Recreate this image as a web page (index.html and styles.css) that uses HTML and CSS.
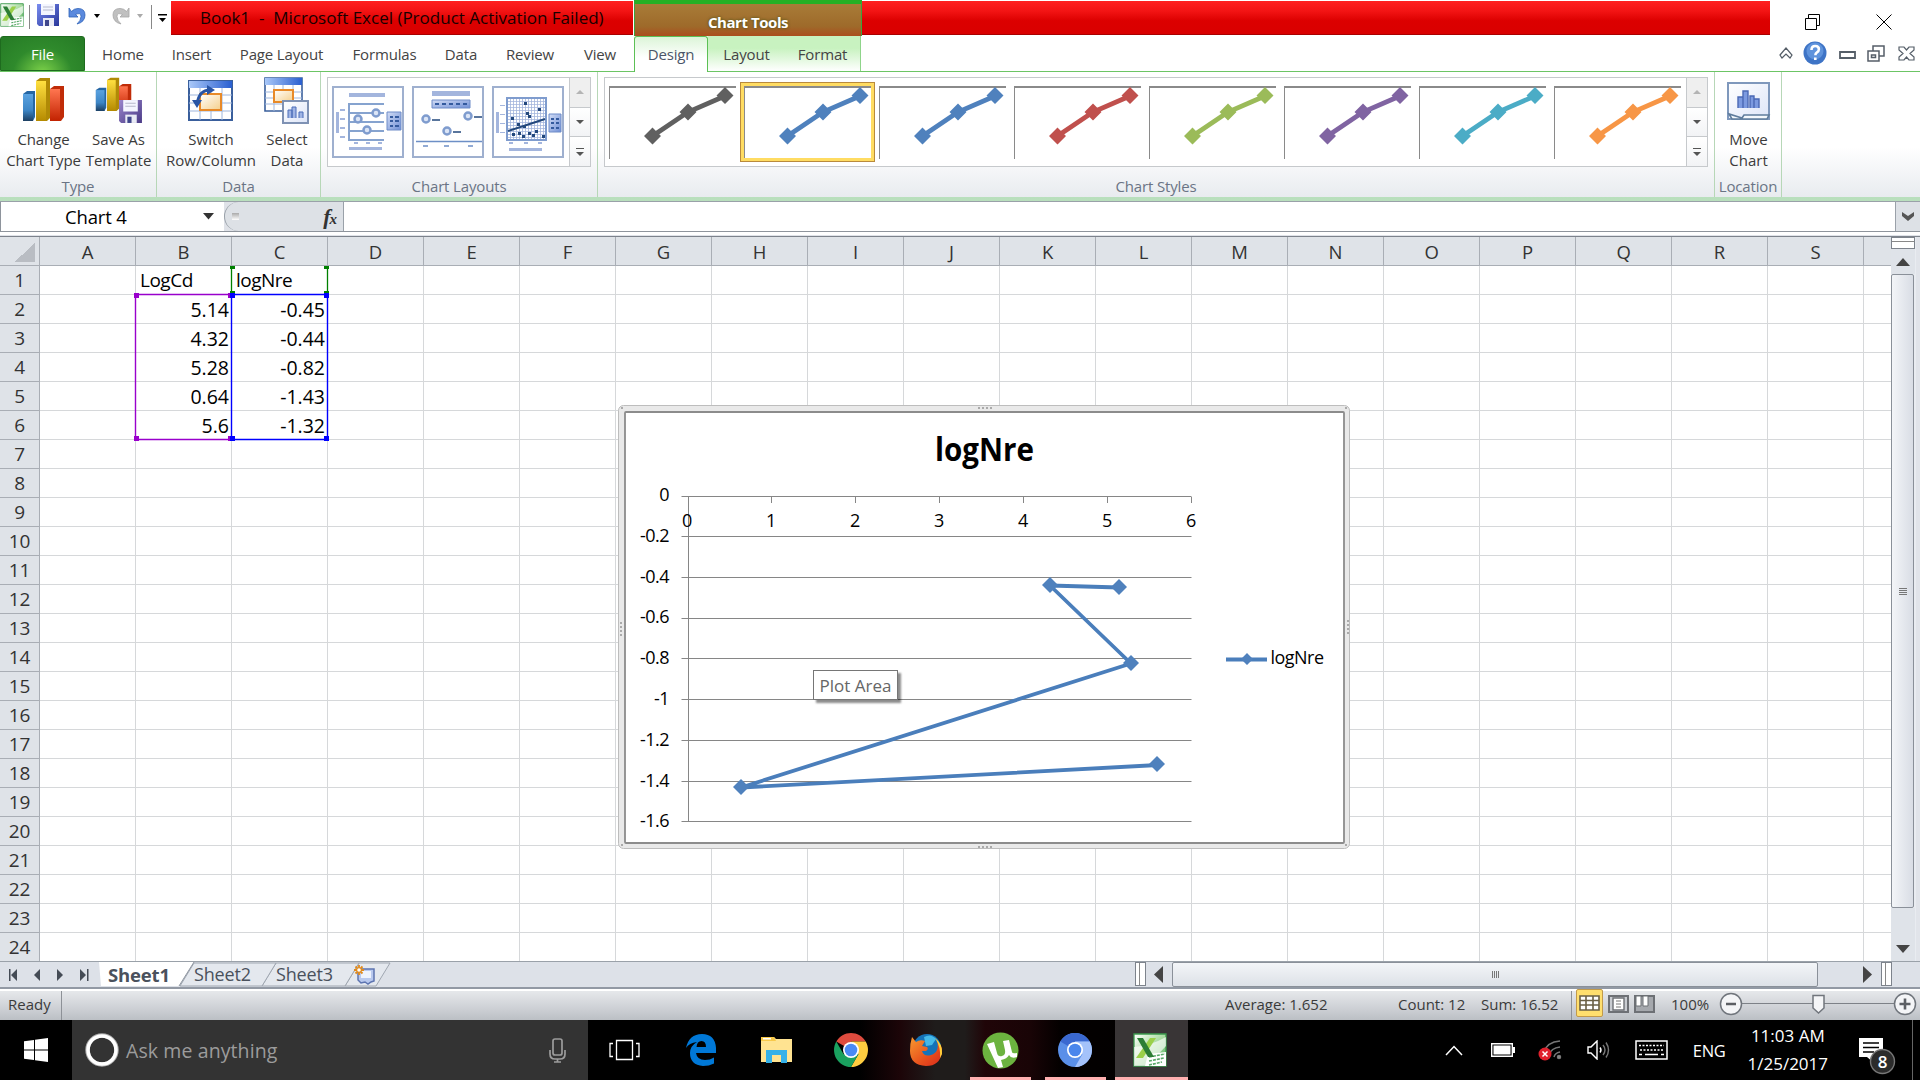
FILE: index.html
```
<!DOCTYPE html>
<html lang="en">
<head>
<meta charset="utf-8">
<title>Book1 - Microsoft Excel</title>
<link rel="stylesheet" href="styles.css">
</head>
<body>
<svg class="defs" width="0" height="0">
  <defs>
    <linearGradient id="gBlue" x2="0" y2="1"><stop offset="0" stop-color="#5aa2e0"/><stop offset=".6" stop-color="#3d86c6"/><stop offset="1" stop-color="#1d3f62"/></linearGradient>
    <linearGradient id="gYel" x2="0" y2="1"><stop offset="0" stop-color="#ffe040"/><stop offset="1" stop-color="#b58a00"/></linearGradient>
    <linearGradient id="gRed" x2="0" y2="1"><stop offset="0" stop-color="#ff7650"/><stop offset="1" stop-color="#c22200"/></linearGradient>
    <linearGradient id="gHead" x2="1"><stop offset="0" stop-color="#a9c8f8"/><stop offset="1" stop-color="#2a5fd0"/></linearGradient>
    <linearGradient id="gDisk" x2="1" y2="1"><stop offset="0" stop-color="#7a8df0"/><stop offset="1" stop-color="#28369a"/></linearGradient>
    <linearGradient id="gPur" x2="1" y2="1"><stop offset="0" stop-color="#9a86cc"/><stop offset="1" stop-color="#4a3a86"/></linearGradient>
    <linearGradient id="gCell" x2="1" y2="1"><stop offset="0" stop-color="#fff"/><stop offset="1" stop-color="#f5cf8a"/></linearGradient>
    <linearGradient id="gPane" x2="1" y2="1"><stop offset="0" stop-color="#fff"/><stop offset="1" stop-color="#dde5f8"/></linearGradient>
    <linearGradient id="gLeg" x2="1" y2="1"><stop offset="0" stop-color="#d3ddf5"/><stop offset="1" stop-color="#6f8fd6"/></linearGradient>
    <linearGradient id="gXl" x2="1" y2="1"><stop offset="0" stop-color="#fff"/><stop offset=".5" stop-color="#a9dba0"/><stop offset="1" stop-color="#4fae5c"/></linearGradient>
    <linearGradient id="gFox" x2="1" y2="1"><stop offset="0" stop-color="#f79a30"/><stop offset=".6" stop-color="#e8501c"/><stop offset="1" stop-color="#d8281c"/></linearGradient>
    <pattern id="dots" width="3" height="3" patternUnits="userSpaceOnUse"><path d="M0 0h3M0 0v3" stroke="#a3b5dd" stroke-width="1.6"/></pattern>
    <symbol id="bars3" viewBox="0 0 44 48">
      <path d="M1 17l4-3h8v26l-2 4H1z" fill="#2566a4"/><path d="M1 17h10v27H1z" fill="url(#gBlue)"/>
      <path d="M14 4l4-3h10v40l-3 3H14z" fill="#b08a06"/><path d="M14 4h10v40H14z" fill="url(#gYel)"/>
      <path d="M28 12l4-3h10v31l-3 4H28z" fill="#c02c08"/><path d="M28 12h10v32H28z" fill="url(#gRed)"/>
    </symbol>
    <symbol id="excel" viewBox="0 0 34 34">
      <path d="M1 1h32v32H1z" fill="url(#gXl)" stroke="#3d9a4e" stroke-width="1.3"/>
      <path d="M1 14q16-1 32-10v9L14 33H1z" fill="#fff" opacity=".65"/>
      <path d="M15 21l18-2v14H12z" fill="#fff"/>
      <path d="M16 24l16-3M16 28l15-3M16 32l13-3" stroke="#58a968" stroke-width="1.6" stroke-dasharray="3 1"/>
      <path d="M17 5h6L10 25H3z" fill="#9bd04a"/><path d="M4 5h6l11 19h-6z" fill="#2c7d35"/>
    </symbol>
    <symbol id="spark" viewBox="0 0 126 72">
      <path d="M42.500 50L78 26l37-16" fill="none" stroke="currentColor" stroke-width="4.800"/>
      <path d="M42.500 41.500l8.500 8.500-8.500 8.500-8.500-8.500zM78 17.500l8.500 8.500-8.500 8.500-8.500-8.500zM115 1l8.500 8.500-8.500 8.500-8.500-8.500z" fill="currentColor"/>
    </symbol>
    <symbol id="floppy" viewBox="0 0 24 24">
      <path d="M1 1h22v22H3l-2-2z" fill="inherit"/><path d="M5 1h14v11H5z" fill="#f4f6ff"/><path d="M7 4h10M7 7h10" stroke="#b6b9cc"/>
      <path d="M7 15h11v8H7z" fill="#e9ebf5"/><path d="M9 17h4v6H9z" fill="#40478c"/>
    </symbol>
  </defs>
</svg>
<div class="window">
  <header class="titlebar">
    <div class="quick">
      <svg width="24" height="24"><use href="#excel"/></svg>
      <i class="bar"></i>
      <svg class="q-save" width="24" height="24" fill="url(#gDisk)"><use href="#floppy"/></svg>
      <svg class="q-undo" width="18" height="18" viewBox="0 0 18 18"><path d="M1 1v9h9L7.500 7.500Q13 5 13 9.500q0 4-4 7.500 8-2 8-9 0-6.500-7-6.500-4 0-6.500 3z" fill="#5b8ade" stroke="#2f62b8" stroke-width=".8"/></svg>
      <svg class="q-car" width="6" height="5"><path d="M0 0h6L3 4z"/></svg>
      <svg class="q-redo" width="18" height="18" viewBox="0 0 18 18"><path d="M17 1v9H8l2.500-2.500Q5 5 5 9.500q0 4 4 7.500-8-2-8-9 0-6.500 7-6.500 4 0 6.500 3z" fill="#c0c0c0" stroke="#a6a6a6" stroke-width=".8"/></svg>
      <svg class="q-car2" width="6" height="5"><path d="M0 0h6L3 4z" fill="#aaa"/></svg>
      <i class="bar bar2"></i>
      <svg class="q-more" width="9" height="9"><path d="M0 0h9v1.500H0zM1 4h7L4.500 8z"/></svg>
    </div>
    <div class="title"><span>Book1&nbsp; -&nbsp; Microsoft Excel (Product Activation Failed)</span></div>
    <div class="context"><span>Chart Tools</span></div>
    <div class="title-rest"></div>
    <div class="winbtns">
      <svg width="16" height="16" viewBox="0 0 16 16" fill="none" stroke="#000"><path d="M.500 4.500h11v11H.500zM3.500 4V.500h11v11H12"/></svg>
      <svg width="16" height="16" viewBox="0 0 16 16" stroke="#000"><path d="M.500.500l15 15M15.500.500l-15 15"/></svg>
    </div>
  </header>
  <nav class="tabs">
    <div class="tab file">File</div>
    <div class="tab home">Home</div><div class="tab insert">Insert</div><div class="tab pagel">Page Layout</div><div class="tab formulas">Formulas</div><div class="tab data">Data</div><div class="tab review">Review</div><div class="tab view">View</div>
    <div class="tab design">Design</div>
    <div class="tab ctx layout">Layout</div><div class="tab ctx format">Format</div>
    <div class="tabs-right">
      <svg width="14" height="12" viewBox="0 0 14 12" fill="#fff" stroke="#555e68" stroke-width="1.200"><path d="M1 8l6-7 6 7-2 3-4-4-4 4z"/></svg>
      <svg width="24" height="24" viewBox="0 0 24 24"><circle cx="12" cy="12" r="11.500" fill="#3e74c6"/><circle cx="12" cy="10" r="8.500" fill="#5f93dc"/><path d="M8.500 9q0-4 3.700-4t3.700 3.300q0 2-2.200 3.300-1.300.8-1.300 2.600M12.300 16.500v2.500" fill="none" stroke="#fff" stroke-width="2.600"/></svg>
      <svg width="17" height="8" viewBox="0 0 17 8"><path d="M1 1h15v6H1z" fill="#fff" stroke="#555e68" stroke-width="1.800"/></svg>
      <svg width="18" height="17" viewBox="0 0 18 17" fill="#fff" stroke="#555e68" stroke-width="1.500"><path d="M6 1h11v10H6z"/><path d="M1 6h11v10H1zM4.500 10h4v2.500h-4z"/></svg>
      <svg width="17" height="15" viewBox="0 0 17 15"><path d="M1 1h5l2.500 3L11 1h5v3l-4 3.500 4 3.500v3h-5l-2.500-3L6 14H1v-3l4-3.500L1 4z" fill="#fff" stroke="#555e68" stroke-width="1.200"/></svg>
    </div>
  </nav>
  <section class="ribbon">
    <div class="group g-type">
      <div class="buttons">
        <div class="btn b1"><svg width="44" height="48"><use href="#bars3"/></svg><span>Change<br>Chart Type</span></div>
        <div class="btn b2"><svg width="48" height="48" viewBox="0 0 48 48"><svg x="0" y="0" width="38" height="37" viewBox="0 0 44 48" preserveAspectRatio="none"><use href="#bars3" width="44" height="48"/></svg><g fill="url(#gPur)"><use href="#floppy" x="23" y="22" width="25" height="25"/></g></svg><span>Save As<br>Template</span></div>
      </div>
      <div class="glabel">Type</div>
    </div>
    <div class="group g-data">
      <div class="buttons">
        <div class="btn b3"><svg width="46" height="48" viewBox="0 0 46 48"><path d="M1 4h43v39H1z" fill="#fff" stroke="#3a5f9c" stroke-width="2"/><path d="M1 4h43v7H1z" fill="url(#gHead)"/><path d="M1 18h43M1 26h43M1 34h43M12 11v32M23 11v32M34 11v32" stroke="#9fb6dc"/><path d="M12 17h21v16H12z" fill="url(#gCell)" stroke="#e88a28" stroke-width="2"/><path d="M9 27q2-14 13-14" fill="none" stroke="#2a55a4" stroke-width="2.800"/><path d="M19 8l8 5-8 5zM4 23l5 8 5-8z" fill="#2a55a4"/></svg><span>Switch<br>Row/Column</span></div>
        <div class="btn b4"><svg width="46" height="48" viewBox="0 0 46 48"><path d="M1 1h37v33H1z" fill="#fff" stroke="#3a5f9c" stroke-width="1.600"/><path d="M1 1h37v7H1z" fill="url(#gHead)"/><path d="M1 15h37M1 21h37M1 27h37M10 8v26M19 8v26M29 8v26" stroke="#9fb6dc"/><path d="M10 13h19v12H10z" fill="url(#gCell)" stroke="#e88a28" stroke-width="2"/><path d="M19 24h25v22H19z" fill="url(#gPane)" stroke="#7f92b4" stroke-width="2"/><path d="M24 41v-8h4v8M28 41V30h4v11M35 41v-6h4v6" fill="#9fb4e4" stroke="#4a6cb8"/></svg><span>Select<br>Data</span></div>
      </div>
      <div class="glabel">Data</div>
    </div>
    <div class="group g-layouts">
      <div class="gallery">
        <div class="thumbs">
          <svg class="lay" width="72" height="72" viewBox="0 0 72 72"><path d="M1 1h70v70H1z" fill="#fff" stroke="#9fb0cf" stroke-width="2"/><path d="M17 7h36v4H17zM17 61h33v3H17zM4 26h3v21H4zM22 56h4v2h-4zM34 56h4v2h-4zM46 56h4v2h-4zM8 23h5v2H8zM8 32h5v2H8zM8 41h5v2H8zM8 50h5v2H8z" fill="#a3b5dd"/><path d="M17 17v37M16 18h36M16 27h36M16 36h36M16 45h36M16 54h36" stroke="#86a3cf" stroke-width="2"/><g fill="#dce5f6" stroke="#7f9cce" stroke-width="2.500"><circle cx="26" cy="33" r="3.500"/><circle cx="44" cy="27" r="3.500"/><circle cx="35" cy="44" r="3.500"/></g><path d="M55 26h14v18H55z" fill="url(#gLeg)" stroke="#6f8cc8"/><path d="M58 31h3m2 0h4M58 35h3m2 0h4M58 40h3m2 0h4" stroke="#345a9e" stroke-width="2"/></svg>
          <svg class="lay" width="72" height="72" viewBox="0 0 72 72"><path d="M1 1h70v70H1z" fill="#fff" stroke="#9fb0cf" stroke-width="2"/><path d="M20 5h38v5H20z" fill="#a3b5dd"/><path d="M20 14h38v8H20z" fill="url(#gLeg)" stroke="#6f8cc8"/><path d="M23 18h32" stroke="#345a9e" stroke-width="2" stroke-dasharray="4 3"/><g fill="#dce5f6" stroke="#7f9cce" stroke-width="2.500"><circle cx="14" cy="33" r="3.500"/><circle cx="56" cy="30" r="3.500"/><circle cx="35" cy="45" r="3.500"/></g><path d="M20 34h8M62 31h8M41 46h8" stroke="#23487c" stroke-width="1.600"/><path d="M4 55.500h66M11 60h5M32 60h5M56 60h5" stroke="#6d8fc6" stroke-width="1.600"/></svg>
          <svg class="lay" width="72" height="72" viewBox="0 0 72 72"><path d="M1 1h70v70H1z" fill="#fff" stroke="#9fb0cf" stroke-width="2"/><path d="M15 12h39v42H15z" fill="url(#dots)" stroke="#7f9cce" stroke-width="2"/><path d="M4 26h3v21H4zM8 19h5v1H8zM8 28h5v1H8zM8 37h5v1H8zM8 46h5v1H8zM17 56h4v2h-4zM32 56h4v2h-4zM46 56h4v2h-4zM17 62h33v3H17z" fill="#a3b5dd"/><path d="M16 45l37-12" stroke="#23487c" stroke-width="2"/><path d="M32 16h3v3h-3zM46 22h3v3h-3zM34 26h3v3h-3zM36 29h3v3h-3zM19 31h3v3h-3zM25 37h3v3h-3zM31 39h3v3h-3zM20 47h3v3h-3zM26 46h3v3h-3zM30 49h3v3h-3zM36 46h3v3h-3zM43 44h3v3h-3zM40 48h3v3h-3zM50 49h3v3h-3z" fill="#23487c"/><path d="M57 28h12v18H57z" fill="url(#gLeg)" stroke="#6f8cc8"/><path d="M59 33h3m2 0h3M59 37h3m2 0h3M59 42h3m2 0h3" stroke="#345a9e" stroke-width="2"/></svg>
        </div>
        <div class="spin"><b class="dis"><i></i></b><b><i></i></b><b class="more"><i></i></b></div>
      </div>
      <div class="glabel">Chart Layouts</div>
    </div>
    <div class="group g-styles">
      <div class="gallery">
        <div class="thumbs" id="styles">
          <div class="sty c0"><svg><use href="#spark"/></svg></div><div class="sty c1 sel"><svg><use href="#spark"/></svg></div><div class="sty c1"><svg><use href="#spark"/></svg></div><div class="sty c2"><svg><use href="#spark"/></svg></div><div class="sty c3"><svg><use href="#spark"/></svg></div><div class="sty c4"><svg><use href="#spark"/></svg></div><div class="sty c5"><svg><use href="#spark"/></svg></div><div class="sty c6"><svg><use href="#spark"/></svg></div>
        </div>
        <div class="spin"><b class="dis"><i></i></b><b><i></i></b><b class="more"><i></i></b></div>
      </div>
      <div class="glabel">Chart Styles</div>
    </div>
    <div class="group g-loc">
      <div class="buttons">
        <div class="btn b5"><svg width="46" height="48" viewBox="0 0 46 48"><path d="M2 6h41v36H2z" fill="url(#gPane)" stroke="#7f98bc" stroke-width="2"/><path d="M3 37l3 5h35l2-4H18l-2 3z" fill="#f4f8fc" stroke="#5f7c9c" stroke-width="1.600"/><path d="M12 31V20h5v11M17 31V14h5v17M24 31V19h4v12M28 31V22h5v9" fill="#7c9ae0" stroke="#4a68b4" stroke-width="1.400"/></svg><span>Move<br>Chart</span></div>
      </div>
      <div class="glabel">Location</div>
    </div>
  </section>
  <section class="formula">
    <div class="namebox"><span>Chart 4</span><svg width="11" height="7"><path d="M0 0h11L5.500 6.500z" fill="#333"/></svg></div>
    <div class="fx"><i></i><em>f<small>x</small></em></div>
    <div class="fin"></div>
    <div class="fexp"><svg width="14" height="9" viewBox="0 0 14 9"><path d="M1 0l6 4 6-4v4L7 9 1 4z" fill="#555"/></svg></div>
  </section>
  <main class="sheet">
    <div class="cells">
      <div class="colheads" id="cols"><div class="corner"></div></div>
      <div class="rows" id="rows"></div>
      <svg class="ranges" width="200" height="180" viewBox="0 0 200 180">
        <path d="M.500 29v144M0 28.500h96M0 173.500h96" stroke="#9900cc" fill="none" stroke-width="1.400"/>
        <path d="M96.500 0v29M192.500 0v29" stroke="#008000" stroke-width="1.300"/>
        <path d="M96.500 28.500h96v145h-96z" stroke="#0000ff" fill="none" stroke-width="1.400"/>
        <path d="M-1 27h5v5h-5zM-1 170h5v5h-5zM93 27h4v5h-4zM93 170h4v5h-4z" fill="#9900cc"/>
        <path d="M95 0h5v3h-5zM189 0h5v3h-5zM95 25h5v3h-5zM189 25h5v3h-5z" fill="#008000"/>
        <path d="M95 27h5v5h-5zM95 170h5v5h-5zM189 27h5v5h-5zM189 170h5v5h-5z" fill="#0000ff"/>
      </svg>
      <svg class="chart" width="734" height="446" viewBox="618 404 734 446">
        <rect x="618.500" y="405.500" width="731" height="443" rx="5" fill="#e9e9e9" stroke="#bdbdbd"/>
        <rect x="625" y="412" width="719" height="431" rx="1" fill="#fff" stroke="#8c8c8c" stroke-width="1.800"/>
        <g fill="#aaa"><path d="M978 407h2v2h-2zm4 0h2v2h-2zm4 0h2v2h-2zm4 0h2v2h-2zM978 846h2v2h-2zm4 0h2v2h-2zm4 0h2v2h-2zm4 0h2v2h-2zM620 622h2v2h-2zm0 4h2v2h-2zm0 4h2v2h-2zm0 4h2v2h-2zM1347 620h2v2h-2zm0 4h2v2h-2zm0 4h2v2h-2zm0 4h2v2h-2zM621 407h2v2h-2zM1345 407h2v2h-2zM621 844h2v2h-2zM1345 844h2v2h-2z"/></g>
        <text class="ct" x="935" y="460.500" textLength="99" lengthAdjust="spacingAndGlyphs">logNre</text>
        <path d="M681.500 496.500h510M681.500 536.500h510M681.500 577.500h510M681.500 618.500h510M681.500 658.500h510M681.500 699.500h510M681.500 740.500h510M681.500 781.500h510M681.500 821.500h510M688.500 496v326M771.500 497v6M855.500 497v6M939.500 497v6M1023.500 497v6M1107.500 497v6M1191.500 497v6" stroke="#868686" fill="none"/>
        <g class="ax" text-anchor="end"><text x="669" y="501">0</text><text x="669" y="541.500">-0.2</text><text x="669" y="582.500">-0.4</text><text x="669" y="623">-0.6</text><text x="669" y="664">-0.8</text><text x="669" y="705">-1</text><text x="669" y="745.500">-1.2</text><text x="669" y="786.500">-1.4</text><text x="669" y="827">-1.6</text></g>
        <g class="ax" text-anchor="middle"><text x="687" y="527">0</text><text x="771" y="527">1</text><text x="855" y="527">2</text><text x="939" y="527">3</text><text x="1023" y="527">4</text><text x="1107" y="527">5</text><text x="1191" y="527">6</text></g>
        <path d="M1119 587.500l-69-2 81 78L741 787.500l417-22.500" fill="none" stroke="#4a7ebb" stroke-width="3.800" stroke-linejoin="round"/>
        <path d="M1226 659.500h41" stroke="#4a7ebb" stroke-width="4"/>
        <path d="M1119 579l8 8-8 8-8-8zM1050 577l8 8-8 8-8-8zM1131 655l8 8-8 8-8-8zM741 779l8 8-8 8-8-8zM1157 756l8 8-8 8-8-8zM1247 653l6 6-6 6-6-6z" fill="#4f81bd"/>
        <text class="ax" x="1270.500" y="664" textLength="53" lengthAdjust="spacingAndGlyphs">logNre</text>
      </svg>
      <div class="tooltip">Plot Area</div>
    </div>
    <div class="vscroll">
      <div class="vsplit"></div>
      <div class="varrow up"></div>
      <div class="vthumb"><i></i></div>
      <div class="varrow down"></div>
    </div>
  </main>
  <section class="sheetbar">
    <div class="snav">
      <svg width="9" height="12"><path d="M0 0h1.500v12H0zM8 0v12L2 6z" fill="#444b55"/></svg>
      <svg width="7" height="12"><path d="M6 0v12L0 6z" fill="#444b55"/></svg>
      <svg width="7" height="12"><path d="M0 0v12l6-6z" fill="#444b55"/></svg>
      <svg width="9" height="12"><path d="M7 0h1.500v12H7zM0 0v12l6-6z" fill="#444b55"/></svg>
    </div>
    <div class="stabs">
      <svg class="tabshapes" width="300" height="25" viewBox="0 0 300 25"><path d="M247 24l14-23h31l-14 23z" fill="#e4e8ee" stroke="#a0a7b1"/><path d="M164 24l14-23h83l-14 23z" fill="#e4e8ee" stroke="#a0a7b1"/><path d="M82 24L96 1h82l-14 23z" fill="#e4e8ee" stroke="#a0a7b1"/><path d="M1 0h95L81 24H3z" fill="#fff"/><path d="M96 0L81 24" stroke="#8f96a0"/></svg>
      <span class="s1">Sheet1</span><span class="s2">Sheet2</span><span class="s3">Sheet3</span>
      <svg class="snew" width="24" height="20" viewBox="0 0 24 20"><path d="M5 4h16v12l-3 1-3 2-3-2-4 1-3-3z" fill="#b9c9ee" stroke="#5d74b0" stroke-width="1.500"/><path d="M8 6h10v7H8z" fill="#eef3fd"/><path d="M6 0v10M1 5h10M2.500 1.500l7 7M9.500 1.500l-7 7" stroke="#e08a1c" stroke-width="1.800"/><circle cx="6" cy="5" r="1.800" fill="#fff"/></svg>
    </div>
    <div class="hsplit"></div>
    <div class="harrow"><svg width="9" height="17"><path d="M9 0v17L0 8.500z" fill="#444"/></svg></div>
    <div class="hthumb"><i></i></div>
    <div class="htrack"></div>
    <div class="harrow hr"><svg width="9" height="17"><path d="M0 0v17l9-8.500z" fill="#444"/></svg></div>
    <div class="hsplit last"></div>
  </section>
  <section class="status">
    <div class="ready">Ready</div>
    <div class="avg">Average: 1.652</div><div class="cnt">Count: 12</div><div class="sum">Sum: 16.52</div>
    <div class="views">
      <div class="v on"><svg width="21" height="16" viewBox="0 0 21 16"><path d="M1 1h19v14H1zM1 5.500h19M1 10h19M7 1v14M14 1v14" fill="#fff" stroke="#6a6045" stroke-width="1.600"/></svg></div>
      <svg width="21" height="18" viewBox="0 0 21 18"><path d="M1 1h19v16H1z" fill="#c9ccd1" stroke="#6d7075" stroke-width="2"/><path d="M5 3h11v12H5z" fill="#fff" stroke="#6d7075" stroke-width="1.400"/><path d="M8 6h5M8 9h5M8 12h5" stroke="#777"/></svg>
      <svg width="21" height="18" viewBox="0 0 21 18"><path d="M1 1h19v16H1z" fill="#a5a8ad" stroke="#6d7075" stroke-width="2"/><path d="M2 1h5v10H2zM9 1h5v10H9z" fill="#fff" stroke="#6d7075"/></svg>
    </div>
    <div class="pct">100%</div>
    <svg class="zoombar" width="200" height="26" viewBox="0 0 200 26"><path d="M24 12.500h152" stroke="#7d8187"/><g fill="#f4f5f7" stroke="#70757c" stroke-width="1.500"><circle cx="13" cy="13" r="10.500"/><circle cx="187" cy="13" r="10.500"/><path d="M95 4.500h11V17l-5.500 5L95 17z"/></g><path d="M8 13h10M181.500 13h11M187 7.500v11" stroke="#5c5f64" stroke-width="2.600"/></svg>
  </section>
  <footer class="taskbar">
    <div class="start"><svg width="24" height="24" viewBox="0 0 24 24" fill="#fff"><path d="M0 3.200L10 2v9.500H0zM11 1.800L24 0v11.500H11zM0 12.500h10V22L0 20.800zM11 12.500h13V24l-13-1.800z"/></svg></div>
    <div class="search">
      <svg width="34" height="34" viewBox="0 0 34 34"><circle cx="17" cy="17" r="14.500" fill="none" stroke="#aaa" stroke-width="4.500"/><circle cx="17" cy="17" r="14" fill="none" stroke="#fff" stroke-width="3.500"/></svg>
      <span>Ask me anything</span>
      <svg width="17" height="25" viewBox="0 0 17 25" fill="none" stroke="#9c9c9c" stroke-width="1.700"><rect x="4" y="1" width="9" height="16" rx="2"/><path d="M1 12v4q0 5 5 5h5q5 0 5-5v-4M8.500 21v3M5 24h7"/></svg>
    </div>
    <div class="app tv"><svg width="31" height="22" viewBox="0 0 31 22" fill="none" stroke="#fff" stroke-width="1.300"><path d="M7.500 1.500h16v19h-16zM4 4.500H1v13h3M27 4.500h3v13h-3"/></svg></div>
    <div class="app"><svg width="32" height="34" viewBox="0 0 32 34"><path d="M1 15Q4 1 17 1q13 0 14 14v5H11q1 7 9 7 5 0 9-2.500v6Q24 33 18 33 5 32 5 20q0-7 7-11Q4 10 1 15zM11.500 14H21q0-6-4.500-6T11.500 14z" fill="#0078d7"/></svg></div>
    <div class="app"><svg width="33" height="28" viewBox="0 0 33 28"><path d="M1 1h13l2 2h16v23H1z" fill="#ffe391"/><path d="M1 1h13l2 4H1z" fill="#f8c94a"/><path d="M3 2h8v1.500H3z" fill="#fff"/><path d="M6 14h21v13h-6v-8h-9v8H6z" fill="#35b1e8"/></svg></div>
    <div class="app"><svg width="34" height="34" viewBox="0 0 34 34"><path d="M17 17L2.300 8.500A17 17 0 0 1 31.700 8.500H17z" fill="#dd4b3e"/><path d="M17 8.500h14.700A17 17 0 0 1 17 34l7.400-12.700z" fill="#ffcd40"/><path d="M2.300 8.500A17 17 0 0 0 17 34l7.400-12.700L17 17l-7.400 4.200z" fill="#1aa15f"/><circle cx="17" cy="17" r="8" fill="#fff"/><circle cx="17" cy="17" r="6.300" fill="#4a8af4"/></svg></div>
    <div class="app"><svg width="34" height="34" viewBox="0 0 34 34"><circle cx="18" cy="15" r="14" fill="#1573b8"/><path d="M15 4q7-4 12 2l-4 6-6 1z" fill="#45b9e8"/><path d="M3 4l4 5q4-3 9-1l-3 5 5 1q2 2-1 4h-4q2 6 9 4 9-3 6-14 6 6 5 11-2 14-16 14Q1 32 1 18 1 10 3 4z" fill="url(#gFox)"/><path d="M26 5q8 6 7 16l-2 4q1-11-5-20z" fill="#ffcf3a"/></svg></div>
    <div class="app run"><svg width="37" height="37" viewBox="0 0 37 37"><circle cx="18.500" cy="18.500" r="18" fill="#6cb33f"/><path d="M5 12l7-2 3 11q1 4 5 3 4-1 3-6l-2-9 6-1 3 12q0 2 5 1v4q-6 2-8-2-2 4-8 5l2 7-5 1z" fill="#fff"/></svg></div>
    <div class="app run"><svg width="34" height="34" viewBox="0 0 34 34"><circle cx="17" cy="17" r="17" fill="#5a8fe8"/><path d="M17 17L2.300 8.500A17 17 0 0 1 31.700 8.500H17z" fill="#3a68d0"/><path d="M17 8.500h14.700A17 17 0 0 1 17 34l7.400-12.700z" fill="#a4c2fa"/><circle cx="17" cy="17" r="8" fill="#fff"/><circle cx="17" cy="17" r="6.300" fill="#4a86ec"/></svg></div>
    <div class="app run active"><svg width="34" height="34"><use href="#excel"/></svg></div>
    <div class="tray">
      <svg class="t-up" width="18" height="11" viewBox="0 0 18 11" fill="none" stroke="#fff" stroke-width="1.500"><path d="M1 10l8-8.500 8 8.500"/></svg>
      <svg class="t-bat" width="24" height="14" viewBox="0 0 24 14"><path d="M.700.700h20.600v12.600H.700z" fill="none" stroke="#fff" stroke-width="1.400"/><path d="M2.500 2.500h17v9h-17zM22 4h2v6h-2z" fill="#fff"/></svg>
      <svg class="t-wifi" width="24" height="22" viewBox="0 0 24 22" fill="none" stroke="#777" stroke-width="1.500"><path d="M6 13Q9 3 22 2M11 16q2-7 11-8M16 18q1-4 6-5"/><circle cx="21" cy="18" r="1.500" fill="#999"/><circle cx="7" cy="15" r="6.500" fill="#e0202c" stroke="none"/><path d="M4.500 12.500l5 5M9.500 12.500l-5 5" stroke="#fff"/></svg>
      <svg class="t-vol" width="23" height="20" viewBox="0 0 23 20" fill="none" stroke="#fff" stroke-width="1.400"><path d="M1 7h3l6-6v18l-6-6H1z"/><path d="M13 7.500q2 2.500 0 5"/><path d="M16 5q4 5 0 10M19 2.500q5 7.500 0 15" stroke="#777"/></svg>
      <svg class="t-kbd" width="33" height="20" viewBox="0 0 33 20" fill="none" stroke="#fff" stroke-width="1.500"><path d="M1 1h31v18H1z"/><path d="M4 5.500h25M5 10h23" stroke-dasharray="2 1.500"/><path d="M4 14.500h3m3 0h13m3 0h3"/></svg>
      <span class="t-eng">ENG</span>
      <div class="clock"><span>11:03 AM</span><span>1/25/2017</span></div>
      <svg class="t-note" width="38" height="38" viewBox="0 0 38 38"><path d="M1 1h24v19h-9v6l-7-6H1z" fill="#fff"/><path d="M5 6h16M5 10.500h16M5 15h11" stroke="#000" stroke-width="1.500"/><circle cx="24.500" cy="24.500" r="12" fill="#2b2b2b" stroke="#777" stroke-width="1.400"/><text x="24.500" y="30.500" text-anchor="middle" class="badge">8</text></svg>
    </div>
  </footer>
</div>
<script src="grid.js"></script>
</body>
</html>
```
FILE: grid.js
```
const values = {
  1: { B: 'LogCd', C: 'logNre' },
  2: { B: '5.14', C: '-0.45' },
  3: { B: '4.32', C: '-0.44' },
  4: { B: '5.28', C: '-0.82' },
  5: { B: '0.64', C: '-1.43' },
  6: { B: '5.6', C: '-1.32' }
};
const letters = 'ABCDEFGHIJKLMNOPQRS'.split('');
const add = (parent, cls, text) => {
  const el = document.createElement('div');
  el.className = cls;
  if (text) el.textContent = text;
  parent.appendChild(el);
  return el;
};
const cols = document.getElementById('cols');
letters.forEach(l => add(cols, 'colhead', l));
add(cols, 'colhead rest');
const rows = document.getElementById('rows');
for (let r = 1; r <= 24; r++) {
  const row = add(rows, 'row');
  add(row, 'rowhead', String(r));
  letters.forEach(l => {
    const v = values[r] && values[r][l];
    add(row, v && r > 1 ? 'cell num' : 'cell', v);
  });
  add(row, 'cell rest');
}
```
FILE: styles.css
```
* { box-sizing: border-box; }
body { margin: 0; background: #fff; font-family: "Open Sans", "Noto Sans", sans-serif; font-size: 15px; letter-spacing: -0.15px; color: #3b3b3b; overflow: hidden; }
.defs { position: absolute; }
svg { display: block; flex: none; }
.window { width: 1920px; height: 1080px; display: flex; flex-direction: column; }

.titlebar { height: 36px; display: flex; flex: none; }
.quick { width: 171px; flex: none; display: flex; align-items: flex-start; padding: 3px 0 0 0; }
.quick .bar { width: 1px; height: 24px; background: #888; margin: 2px 0 0 5px; }
.q-save { margin-left: 6px; }
.q-undo { margin: 4px 0 0 8px; }
.q-car { margin: 11px 0 0 8px; }
.q-redo { margin: 4px 0 0 12px; }
.q-car2 { margin: 11px 0 0 7px; }
.quick .bar2 { margin-left: 8px; }
.q-more { margin: 11px 0 0 6px; }
.title, .title-rest { margin: 1px 0; background: linear-gradient(#ff2020, #f31414 30%, #dc0000 60%, #d90000); border-bottom: 1px solid #a80000; }
.title { width: 462px; padding-left: 29px; font-size: 17px; line-height: 34px; color: #180000; white-space: nowrap; letter-spacing: 0; }
.context { width: 228px; margin-left: 1px; border-top: 4px solid #25b025; border-right: 1px solid #3ea23e; border-left: 1px solid #3ea23e; background: linear-gradient(#a87c38, #9e6a2a 70%, #ab4e1e); color: #fff; font-weight: 700; text-align: center; line-height: 36px; text-shadow: 0 0 3px #3c4a10; letter-spacing: -0.45px; }
.title-rest { width: 908px; }
.winbtns { display: flex; gap: 55px; padding: 14px 0 0 35px; }

.tabs { height: 36px; display: flex; flex: none; border-bottom: 1px solid #6cc565; }
.tab { text-align: center; line-height: 36px; height: 36px; color: #444; }
.file { width: 85px; background: radial-gradient(ellipse at 50% 110%, #7ed34a, #2f8a2c 50%, #257a25); color: #fff; border: 1px solid #1e6b1e; border-radius: 3px 3px 0 0; height: 35px; line-height: 34px; }
.home { width: 76px; }
.insert { width: 61px; }
.pagel { width: 119px; }
.formulas { width: 87px; }
.data { width: 66px; }
.review { width: 72px; }
.view { width: 68px; }
.design { width: 74px; border: 1px solid #5cc055; border-bottom: 0; border-radius: 3px 3px 0 0; background: linear-gradient(#dcf5d8, #fff 60%); line-height: 34px; color: #4a5568; }
.ctx { background: linear-gradient(#c8f2c0 35%, #fff); height: 35px; }
.layout { width: 77px; }
.format { width: 76px; border-right: 1px solid #8fd48a; }
.tabs-right { margin-left: auto; display: flex; align-items: center; gap: 10px; padding: 0 5px 1px 0; }
.tabs-right svg:nth-child(3) { margin: 4px 0 0 2px; }
.tabs-right svg:nth-child(4) { margin-left: 1px; }
.tabs-right svg:nth-child(5) { margin-left: 3px; }

.ribbon { height: 129px; flex: none; display: flex; background: linear-gradient(#fff 60%, #e8ebef); border-image: linear-gradient(#7fae86, #9fd0a5 50%, #b9dfbd) 1; border-width: 0 0 4px; border-style: solid; }
.group { border-right: 1px solid #b7d7b7; display: flex; flex-direction: column; justify-content: space-between; height: 125px; flex: none; }
.g-type { width: 157px; }
.g-data { width: 164px; }
.g-layouts { width: 277px; }
.g-styles { width: 1117px; }
.g-loc { width: 67px; }
.glabel { text-align: center; color: #6a7485; line-height: 22px; height: 22px; }
.buttons { display: flex; }
.btn { display: flex; flex-direction: column; align-items: center; text-align: center; line-height: 21px; white-space: nowrap; padding-top: 5px; gap: 4px; flex: none; letter-spacing: 0; }
.b1 { width: 81px; padding-left: 6px; letter-spacing: -0.1px; }
.b2 { width: 75px; }
.b3 { width: 108px; }
.b4 { width: 44px; }
.b5 { width: 67px; }
.gallery { display: flex; height: 90px; margin: 5px 6px 0; }
.thumbs { border: 1px solid #c6c9cc; border-right: 0; background: #fff; display: flex; flex: 1; padding: 8px 0 0 4px; gap: 8px; }
#styles { gap: 8px; padding-left: 4px; }
.spin { width: 22px; display: flex; flex-direction: column; }
.spin b { flex: 1; border: 1px solid #c6c9cc; border-bottom-width: 0; background: linear-gradient(#fff, #f2f3f5); display: flex; align-items: center; justify-content: center; }
.spin b:last-child { border-bottom-width: 1px; }
.spin b.dis { background: #efefef; }
.spin i { border: 4px solid transparent; border-top: 4px solid #555; border-bottom: 0; }
.spin .dis i { border-top: 0; border-bottom: 4px solid #b4b4b4; }
.spin .more i { position: relative; top: 2px; }
.spin .more i::before { content: ""; position: absolute; left: -4px; top: -8px; width: 8px; height: 1px; background: #555; }
.sty { width: 127px; height: 73px; border-left: 1.500px solid #8a8a8a; border-top: 2px solid #8a8a8a; flex: none; }
.sty svg { width: 126px; height: 72px; margin-top: -2px; }
.sty.sel { box-shadow: 0 0 0 3px #ffdc62, 0 0 0 4px #b98a3c; height: 72px; }
.c0 { color: #606060; } .c1 { color: #4f81bd; } .c2 { color: #c0504d; } .c3 { color: #9bbb59; } .c4 { color: #8064a2; } .c5 { color: #4bacc6; } .c6 { color: #f79646; }

.formula { height: 35px; flex: none; display: flex; border-top: 1px solid #9aa1a9; background: linear-gradient(#dfe2e8 29px, #8e949c 29px, #8e949c 30px, #fff 30px, #fff 33px, #dfe2e8 33px); }
.formula > div { height: 29px; }
.namebox { width: 224px; background: #fff; border-left: 1px solid #8e949c; display: flex; justify-content: space-between; align-items: center; padding: 0 10px 0 64px; font-size: 18.500px; color: #000; }
.fx { width: 120px; background: #dde1e6; border: 1px solid #9aa1a9; border-width: 0 1px 0 1px; border-radius: 15px 0 0 15px; display: flex; justify-content: space-between; align-items: center; padding: 0 7px; }
.fx i { width: 7px; height: 7px; background: linear-gradient(#aaa, #fff); }
.fx em { font: italic bold 22px "Liberation Serif", serif; color: #333; letter-spacing: -1px; }
.fx small { font-size: 15px; }
.fin { flex: 1; background: #fff; }
.fexp { width: 25px; background: #dde1e6; border-left: 1px solid #9aa1a9; display: flex; align-items: center; justify-content: center; }

.sheet { height: 725px; flex: none; display: flex; border-top: 1px solid #7d838c; }
.cells { width: 1891px; flex: none; overflow: hidden; position: relative; }
.colheads { display: flex; height: 29px; }
.corner { width: 40px; flex: none; border-right: 1px solid #a9aeb5; border-bottom: 1px solid #a9aeb5; background: linear-gradient(135deg, transparent 50%, #b9bdc3 50%) 15px 5px / 20px 20px no-repeat #dfe3e8; }
.colhead { width: 96px; flex: none; text-align: center; line-height: 29px; font-size: 18.500px; color: #333; background: #dfe3e8; border-right: 1px solid #a9aeb5; border-bottom: 1px solid #a9aeb5; }
.rest { width: 60px; }
.row { display: flex; height: 29px; }
.rowhead { width: 40px; flex: none; text-align: center; line-height: 29px; font-size: 19px; color: #333; background: #dfe3e8; border-right: 1px solid #a9aeb5; border-bottom: 1px solid #a9aeb5; }
.cell { width: 96px; flex: none; border-right: 1px solid #d6d8da; border-bottom: 1px solid #d6d8da; font-size: 19px; line-height: 29px; padding: 0 2px 0 4px; color: #000; letter-spacing: -0.5px; }
.num { text-align: right; font-size: 19.500px; letter-spacing: 0; }
.ranges { position: absolute; left: 135px; top: 29px; overflow: visible; }
.chart { position: absolute; left: 618px; top: 167px; }
.ax { font-size: 18px; letter-spacing: -0.5px; fill: #000; }
.ct { font-size: 32px; font-weight: 700; fill: #000; letter-spacing: 0; }
.tooltip { position: absolute; left: 813px; top: 433px; width: 85px; height: 30px; border: 1px solid #767676; background: #fff; color: #666; font-size: 17px; letter-spacing: 0; line-height: 29px; text-align: center; box-shadow: 3px 3px 2px rgba(0,0,0,.45); }

.vscroll { width: 29px; background: #e9ecf1; border-right: 4px solid #e1e4ea; display: flex; flex-direction: column; }
.vsplit { height: 12px; border: 1.500px solid #7d838c; background: linear-gradient(#fff 3px, #888 3px, #888 4px, #fff 4px); width: 24px; }
.varrow { height: 25px; display: flex; align-items: center; justify-content: center; background: #dfe3e9; width: 24px; }
.varrow::before { content: ""; border: 7.500px solid transparent; border-bottom: 8px solid #444; border-top: 0; }
.vthumb { height: 634px; width: 23px; border: 1px solid #8a9099; border-radius: 2px; background: linear-gradient(90deg, #f3f5f8, #d9dde5); display: flex; align-items: center; justify-content: center; }
.vthumb i { width: 8px; height: 7px; background: repeating-linear-gradient(#777 0 1px, transparent 1px 2px); }
.down { flex: 1; height: auto; align-items: flex-end; padding-bottom: 8px; }
.down::before { border-top: 8px solid #444; border-bottom: 0; }

.sheetbar { height: 30px; flex: none; display: flex; background: linear-gradient(#dde1e8 25px, #9299a4 25px, #9299a4 27px, #fff 27px); border-top: 1px solid #9aa1a9; }
.snav { width: 98px; display: flex; gap: 16px; padding: 7px 0 0 9px; }
.stabs { position: relative; width: 1037px; display: flex; font-size: 18px; line-height: 25px; color: #4a515c; letter-spacing: -0.15px; }
.tabshapes { position: absolute; left: 0; top: 0; }
.stabs span { position: relative; width: 82px; }
.stabs .s1 { width: 96px; padding-left: 10px; font-weight: 700; font-size: 18.500px; }
.snew { position: relative; margin: 3px 0 0 -5px; }
.hsplit { width: 11px; height: 24px; border: 1px solid #7d838c; background: linear-gradient(90deg, #fff 3px, #888 3px, #888 4px, #fff 4px); }
.harrow { width: 26px; height: 25px; display: flex; align-items: center; justify-content: center; padding-right: 2px; }
.hthumb { width: 646px; height: 25px; border: 1px solid #8a9099; border-radius: 2px; background: linear-gradient(#f3f5f8, #dde1e7); display: flex; align-items: center; justify-content: center; }
.hthumb i { width: 7px; height: 7px; background: repeating-linear-gradient(90deg, #777 0 1px, transparent 1px 2px); }
.htrack { width: 37px; }

.status { height: 29px; flex: none; display: flex; background: linear-gradient(#e6e8eb, #c9ccd1 70%, #bbbfc4); line-height: 27px; letter-spacing: 0; }
.status > div { white-space: nowrap; }
.ready { width: 62px; padding-left: 8px; border-right: 1px solid #8d9197; }
.avg { margin-left: 1163px; width: 173px; }
.cnt { width: 83px; }
.sum { width: 91px; border-right: 1px solid #8d9197; }
.views { display: flex; gap: 5px; padding-left: 4px; width: 99px; align-items: center; height: 26px; }
.v { width: 27px; height: 28px; margin-top: -3px; border: 1px solid #c29a4a; border-radius: 2px; background: #ffdf6e; display: flex; align-items: center; justify-content: center; }
.pct { width: 47px; }
.zoombar { width: 200px; }

.taskbar { height: 60px; flex: none; display: flex; background: linear-gradient(90deg, #000 0 860px, #1c0508 900px, #1f1c1b 935px, #1f1c1b 965px, #200508 985px, #190406 1030px, #040000 1060px, #000 1200px); color: #fff; }
.start { width: 72px; display: flex; align-items: center; justify-content: center; }
.search { width: 516px; background: #333; display: flex; align-items: center; padding-left: 13px; font-size: 19.500px; color: #9c9c9c; letter-spacing: 0.1px; }
.search span { width: 430px; padding-left: 7px; }
.app { width: 74.800px; height: 60px; display: flex; align-items: center; justify-content: center; flex: none; }
.tv { width: 76px; padding-right: 4px; }
.app.run { background: linear-gradient(#ffb0b0, #ffb0b0) 50% 100% / 61px 3px no-repeat; }
.app.run.active { width: 73px; margin-left: 2px; background: linear-gradient(#393536 57px, #ffb0b0 57px); }
.app.active svg { margin-right: 3px; }
.tray { flex: 1; display: flex; align-items: center; border-right: 1px solid #666; margin-right: 7px; }
.t-up { margin-left: 257px; }
.t-bat { margin-left: 28px; }
.t-wifi { margin-left: 23px; }
.t-vol { margin-left: 25px; }
.t-kbd { margin-left: 25px; }
.t-eng { margin-left: 25px; font-size: 16.500px; letter-spacing: -0.3px; width: 33px; }
.clock { width: 104px; margin-left: 10px; display: flex; flex-direction: column; text-align: center; font-size: 17px; line-height: 28px; letter-spacing: 0; }
.t-note { margin: 12px 0 0 18px; }
.badge { font-size: 17px; font-weight: 600; fill: #fff; }
```
